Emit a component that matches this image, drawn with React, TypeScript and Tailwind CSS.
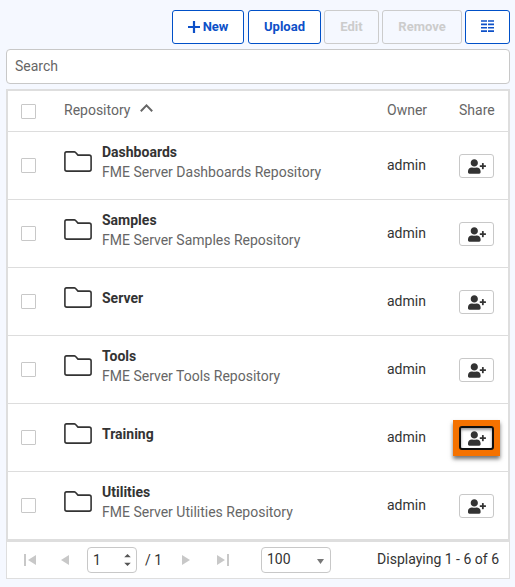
import React from "react";
import { FaUserPlus } from "react-icons/fa";

interface Repository {
  name: string;
  description?: string;
  active?: boolean;
}

const repositories: Repository[] = [
  { name: "Dashboards", description: "FME Server Dashboards Repository" },
  { name: "Samples", description: "FME Server Samples Repository" },
  { name: "Server" },
  { name: "Tools", description: "FME Server Tools Repository" },
  { name: "Training", active: true },
  { name: "Utilities", description: "FME Server Utilities Repository" },
];

const buttonBase = "flex h-[34px] shrink-0 items-center justify-center rounded-[3px] border text-[13px] font-bold";
const enabled = "border-[#0050c8] bg-white text-[#0d50c8]";
const disabled = "border-[#cccccc] text-[#cccccc]";

function Checkbox() {
  return <span role="checkbox" aria-checked="false" className="block size-[15px] rounded-[1px] border border-[#c8c8c8] bg-white" />;
}

function Folder() {
  return (
    <svg className="mt-[19px] h-[21px] w-7" viewBox="0 0 28 21" fill="none" stroke="#333" strokeWidth="1.6" strokeLinejoin="round">
      <path d="M2.5 0.9H10.2Q11 0.9 11.6 1.5L14 4.1H25.2Q27.1 4.1 27.1 6V18.2Q27.1 20.1 25.2 20.1H2.8Q0.9 20.1 0.9 18.2V2.7Q0.9 0.9 2.5 0.9Z" />
    </svg>
  );
}

function ShareButton({ active }: { active?: boolean }) {
  if (active) {
    return (
      <div className="-ml-1.5 mt-4 flex h-9 w-[47px] items-center justify-center bg-[#f57200] shadow-[0_3px_4px_rgba(0,0,0,0.55)]">
        <button className="flex h-6 w-[35px] items-center justify-center rounded-[3px] border-2 border-[#101010] bg-white text-[#333] shadow-[inset_0_2px_3px_rgba(0,0,0,0.4)]">
          <FaUserPlus className="h-[15px] w-[18px]" />
        </button>
      </div>
    );
  }
  return (
    <button className="mt-[22px] flex h-6 w-[35px] items-center justify-center rounded-[3px] border border-[#c8c8c8] bg-white text-[#333]">
      <FaUserPlus className="h-[15px] w-[18px]" />
    </button>
  );
}

function Row({ repo }: { repo: Repository }) {
  return (
    <div className="grid h-[68px] grid-cols-[43px_38px_285px_72px_1fr] items-start border-b border-[#dddddd] pl-[13px] last:h-[67px] last:border-b-0">
      <div className="mt-[26px]"><Checkbox /></div>
      <Folder />
      <div className={repo.description ? "mt-[10px] leading-5" : "mt-5 leading-5"}>
        <div className="font-bold text-[#333]">{repo.name}</div>
        {repo.description && <div className="text-[#666]">{repo.description}</div>}
      </div>
      <div className="mt-[23px] leading-5 text-[#333]">admin</div>
      <ShareButton active={repo.active} />
    </div>
  );
}

export default function App() {
  return (
    <main className="flex h-[587px] w-[515px] flex-col bg-[#f5f8ff] pl-1.5 pr-[5px] pt-2.5 font-['Roboto',sans-serif] text-sm text-[#333]">
      <div className="flex h-[34px] justify-end">
        <button className={`${buttonBase} ${enabled} w-[72px] gap-[3px]`}>
          <svg className="-mt-px size-3" viewBox="0 0 12 12" stroke="currentColor" strokeWidth="2.2"><path d="M6 0v12M0 6h12" /></svg>
          New
        </button>
        <button className={`${buttonBase} ${enabled} ml-1 w-[73px]`}>Upload</button>
        <button className={`${buttonBase} ${disabled} ml-[3px] w-[55px]`}>Edit</button>
        <button className={`${buttonBase} ${disabled} ml-[3px] w-20`}>Remove</button>
        <button aria-label="Columns" className={`${buttonBase} ${enabled} ml-[3px] w-[45px]`}>
          <svg className="mt-[-2px] h-3 w-[13px]" viewBox="0 0 13 12" fill="currentColor">
            <path d="M0 .2h6v1.6H0zM7 .2h6v1.6H7zM0 3.6h6v1.6H0zM7 3.6h6v1.6H7zM0 7h6v1.6H0zM7 7h6v1.6H7zM0 10.2h6v1.7H0zM7 10.2h6v1.7H7z" />
          </svg>
        </button>
      </div>
      <input aria-label="Search" placeholder="Search" className="mt-[5px] h-[35px] w-full shrink-0 rounded border border-[#c8c8c8] bg-white px-2 pb-0.5 placeholder:text-[#666] placeholder:opacity-100" />
      <section className="mt-[5px] border-2 border-b-[3px] border-[#dedede] bg-white">
        <header className="grid h-[41px] grid-cols-[43px_323px_72px_1fr] items-center border-b border-[#dddddd] pl-[13px] text-[#666]">
          <Checkbox />
          <span className="-mt-0.5 flex items-center gap-2.5">
            Repository
            <svg className="-mt-1 h-2 w-[13px]" viewBox="0 0 13 8" fill="none" stroke="#666" strokeWidth="2"><path d="M.8 7.2 6.5 1.4 12.2 7.2" /></svg>
          </span>
          <span className="-mt-0.5">Owner</span>
          <span className="-mt-0.5">Share</span>
        </header>
        <div>{repositories.map((repo) => <Row key={repo.name} repo={repo} />)}</div>
      </section>
      <footer className="flex h-[37px] items-center border border-t-0 border-[#dedede] bg-white pl-[17px] pr-2.5">
        <svg className="h-3 w-3 fill-[#c8c8c8]" viewBox="0 0 12 12"><path d="M0 0h2v12H0zM12 1v10L4 6z" /></svg>
        <svg className="ml-[25px] h-2.5 w-2 fill-[#c8c8c8]" viewBox="0 0 8 10"><path d="M8 0v10L0 5z" /></svg>
        <div className="ml-[18px] flex h-[26px] w-[50px] items-center justify-between rounded border border-[#c8c8c8] pl-[5px] pr-[5px]">
          <span>1</span>
          <svg className="h-3 w-[7px] fill-[#555]" viewBox="0 0 7 12"><path d="M.2 3.3 3.5 0 6.8 3.3zM.2 8.7 3.5 12 6.8 8.7z" /></svg>
        </div>
        <span className="ml-2 w-[17px] whitespace-nowrap">/ 1</span>
        <svg className="ml-5 h-2.5 w-2 fill-[#c8c8c8]" viewBox="0 0 8 10"><path d="M0 0v10l8-5z" /></svg>
        <svg className="ml-[27px] h-3 w-3 fill-[#c8c8c8]" viewBox="0 0 12 12"><path d="M10 0h2v12h-2zM0 1v10l8-5z" /></svg>
        <div className="ml-8 flex h-[26px] w-[70px] items-center justify-between rounded border border-[#c8c8c8] pl-[5px] pr-1.5">
          <span className="-mt-0.5">100</span>
          <svg className="mt-[3px] h-[5px] w-[7px] fill-[#777]" viewBox="0 0 7 5"><path d="M0 0h7L3.5 5z" /></svg>
        </div>
        <span className="-mt-0.5 ml-auto">Displaying 1 - 6 of 6</span>
      </footer>
    </main>
  );
}
